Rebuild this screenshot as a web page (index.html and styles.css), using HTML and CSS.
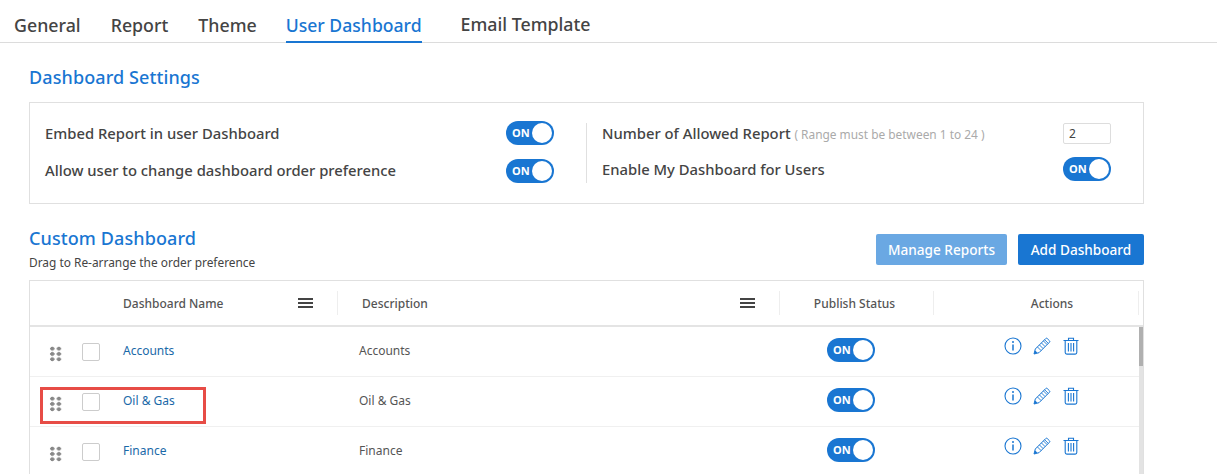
FILE: index.html
```html
<!DOCTYPE html>
<html lang="en">
<head>
    <meta charset="UTF-8">
    <title>User Dashboard</title>
    <link rel="stylesheet" href="styles.css">
</head>
<body>
    <svg class="icon-defs" width="0" height="0">
        <symbol id="i-info" viewBox="0 0 18 18">
            <circle cx="9" cy="9" r="8" fill="none" stroke="currentColor" stroke-width="1.1"/>
            <circle cx="9" cy="5" r="1" fill="currentColor"/>
            <path d="M9 7.4V13.6" fill="none" stroke="currentColor" stroke-width="1.5"/>
        </symbol>
        <symbol id="i-pencil" viewBox="0 0 18 18">
            <path d="M1 17l1.3-5L12.8 1.5a1 1 0 0 1 1.4 0l2.3 2.3a1 1 0 0 1 0 1.4L6 15.7z" fill="none" stroke="currentColor" stroke-width="1"/>
            <path d="M4.4 9.9l3.7 3.7M6.4 7.9l3.7 3.7M8.4 5.9l3.7 3.7M10.4 3.9l3.7 3.7M11.6 2.7l3.7 3.7" fill="none" stroke="currentColor" stroke-width="0.9"/>
            <path d="M1 17l1.2-3.4 2.2 2.2z" fill="currentColor"/>
        </symbol>
        <symbol id="i-trash" viewBox="0 0 18 18">
            <path d="M1.5 3.5H16.5M6.5 3.3V1.2H11.5V3.3M3.2 3.5V15.5a1.6 1.6 0 0 0 1.6 1.6H13.2a1.6 1.6 0 0 0 1.6-1.6V3.5" fill="none" stroke="currentColor" stroke-width="1.1"/>
            <path d="M6.4 6V14.5M9 6V14.5M11.6 6V14.5" fill="none" stroke="currentColor" stroke-width="1.1"/>
        </symbol>
    </svg>

    <nav class="tabs">
        <a class="tab">General</a>
        <a class="tab">Report</a>
        <a class="tab">Theme</a>
        <a class="tab active">User Dashboard</a>
        <a class="tab tab-email">Email Template</a>
    </nav>

    <main class="content">
        <h2 class="section-title">Dashboard Settings</h2>

        <section class="settings">
            <div class="settings-col left">
                <div class="setting">
                    <span class="label">Embed Report in user Dashboard</span>
                    <span class="toggle">ON</span>
                </div>
                <div class="setting">
                    <span class="label">Allow user to change dashboard order preference</span>
                    <span class="toggle">ON</span>
                </div>
            </div>
            <div class="settings-col right">
                <div class="setting">
                    <span class="label">Number of Allowed Report <small class="hint">( Range must be between 1 to 24 )</small></span>
                    <input class="num-input" type="text" value="2">
                </div>
                <div class="setting">
                    <span class="label">Enable My Dashboard for Users</span>
                    <span class="toggle">ON</span>
                </div>
            </div>
        </section>

        <div class="custom-head">
            <div>
                <h2 class="section-title">Custom Dashboard</h2>
                <p class="sub">Drag to Re-arrange the order preference</p>
            </div>
            <div class="buttons">
                <button class="btn btn-light">Manage Reports</button>
                <button class="btn">Add Dashboard</button>
            </div>
        </div>

        <section class="grid">
            <div class="grid-head">
                <div></div>
                <div class="th th-name"><span>Dashboard Name</span><span class="menu"></span></div>
                <div class="th th-desc"><span>Description</span><span class="menu"></span></div>
                <div class="th th-center th-status">Publish Status</div>
                <div class="th th-center th-actions">Actions</div>
            </div>
            <div class="grid-body">
                <div class="rows">
                    <div class="row">
                        <div class="row-tools"><span class="drag"></span><span class="check"></span></div>
                        <a class="name">Accounts</a>
                        <div class="desc">Accounts</div>
                        <div class="status"><span class="toggle">ON</span></div>
                        <div class="actions">
                            <svg class="icon"><use href="#i-info"/></svg>
                            <svg class="icon"><use href="#i-pencil"/></svg>
                            <svg class="icon"><use href="#i-trash"/></svg>
                        </div>
                    </div>
                    <div class="row">
                        <div class="row-tools"><span class="drag"></span><span class="check"></span></div>
                        <a class="name">Oil &amp; Gas</a>
                        <div class="desc">Oil &amp; Gas</div>
                        <div class="status"><span class="toggle">ON</span></div>
                        <div class="actions">
                            <svg class="icon"><use href="#i-info"/></svg>
                            <svg class="icon"><use href="#i-pencil"/></svg>
                            <svg class="icon"><use href="#i-trash"/></svg>
                        </div>
                        <div class="highlight"></div>
                    </div>
                    <div class="row">
                        <div class="row-tools"><span class="drag"></span><span class="check"></span></div>
                        <a class="name">Finance</a>
                        <div class="desc">Finance</div>
                        <div class="status"><span class="toggle">ON</span></div>
                        <div class="actions">
                            <svg class="icon"><use href="#i-info"/></svg>
                            <svg class="icon"><use href="#i-pencil"/></svg>
                            <svg class="icon"><use href="#i-trash"/></svg>
                        </div>
                    </div>
                </div>
                <div class="scrollbar"><div class="thumb"></div></div>
            </div>
        </section>
    </main>
</body>
</html>
```

FILE: styles.css
```css
* {
    box-sizing: border-box;
}
html, body {
    height: 474px;
    overflow: hidden;
}
body {
    margin: 0;
    background: #fff;
    color: #444;
    font-family: "Noto Sans", "Open Sans", sans-serif;
}
.icon-defs {
    position: absolute;
}

/* tabs */
.tabs {
    display: flex;
    height: 43px;
    padding-left: 14px;
    border-bottom: 1px solid #dcdcdc;
}
.tab {
    height: 43px;
    margin-right: 30px;
    padding-top: 13px;
    font-size: 17.8px;
    line-height: 25px;
    font-weight: 500;
    color: #444;
}
.tab.active {
    color: #1976d2;
    border-bottom: 2px solid #1976d2;
    font-size: 17.6px;
    margin-left: -1px;
    margin-right: 39px;
}
.tab-email {
    padding-top: 12px;
}

/* main */
.content {
    width: 1144px;
    padding-left: 29px;
}
.section-title {
    margin: 0;
    font-size: 18px;
    line-height: 24px;
    font-weight: 500;
    letter-spacing: 0.1px;
    color: #1976d2;
}
.content > .section-title {
    margin-top: 22px;
}
.settings {
    display: flex;
    height: 102px;
    margin-top: 13px;
    padding: 20px 0 0 15px;
    border: 1px solid #e0e0e0;
}
.settings-col {
    height: 60px;
    font-size: 14.8px;
    font-weight: 500;
    color: #444;
}
.settings-col.left {
    width: 542px;
    padding-right: 32px;
    border-right: 1px solid #e0e0e0;
}
.settings-col.right {
    width: 524px;
    padding-left: 15px;
}
.setting {
    display: flex;
    justify-content: space-between;
    align-items: center;
    height: 24px;
    margin-bottom: 14px;
    line-height: 22px;
}
.setting:first-child {
    margin-top: -2px;
}
.settings-col.right .setting {
    margin-bottom: 12px;
}
.left .setting + .setting .label {
    margin-top: -2px;
}
.hint {
    font-size: 11.9px;
    font-weight: 400;
    color: #aaa;
}
.num-input {
    width: 48px;
    height: 21px;
    padding: 0 5px;
    border: 1px solid #ddd;
    border-radius: 2px;
    font: 12px "Noto Sans", sans-serif;
    color: #444;
}
.toggle {
    position: relative;
    display: inline-block;
    width: 48px;
    height: 24px;
    padding-left: 6px;
    border-radius: 12px;
    background: #1976d2;
    color: #fff;
    font-size: 11px;
    line-height: 23px;
    font-weight: 700;
}
.toggle::after {
    content: "";
    position: absolute;
    top: 2px;
    right: 2px;
    width: 20px;
    height: 20px;
    border-radius: 50%;
    background: #fff;
}

/* custom dashboard */
.custom-head {
    display: flex;
    justify-content: space-between;
    height: 76px;
    padding-top: 22px;
}
.sub {
    margin: 5px 0 0;
    font-size: 11.9px;
    line-height: 15px;
    color: #444;
}
.buttons {
    display: flex;
    gap: 11px;
    padding-top: 8px;
}
.btn {
    width: 126px;
    height: 31px;
    padding: 0;
    border: 0;
    border-radius: 2px;
    background: #1976d2;
    color: #fff;
    font: 500 13.6px "Noto Sans", sans-serif;
}
.btn-light {
    width: 131px;
    background: #6aa8e3;
}

/* table */
.grid {
    border: 1px solid #e0e0e0;
    border-bottom: 0;
}
.grid-head, .row {
    display: grid;
    grid-template-columns: 93px 215px 442px 154px 205px;
}
.grid-head {
    height: 46px;
    align-items: center;
    border-bottom: 2px solid #e4e4e4;
}
.th {
    display: flex;
    align-items: center;
    justify-content: space-between;
    height: 24px;
    font-size: 12px;
    font-weight: 500;
    color: #555;
    border-right: 1px solid #eee;
}
.th-name {
    padding-right: 24px;
}
.th-desc {
    padding-left: 24px;
    padding-right: 24px;
}
.th-center {
    justify-content: center;
}
.th-status {
    padding-right: 4px;
}
.th-actions {
    padding-left: 32px;
}
.menu {
    width: 15px;
    height: 10px;
    border-top: 2px solid #444;
    border-bottom: 2px solid #444;
    position: relative;
}
.menu::after {
    content: "";
    position: absolute;
    left: 0;
    right: 0;
    top: 2px;
    height: 2px;
    background: #444;
}
.grid-body {
    display: flex;
}
.rows {
    width: 1109px;
}
.row {
    position: relative;
    height: 50px;
    align-items: center;
    padding-bottom: 3px;
    border-bottom: 1px solid #f0f0f0;
    font-size: 12px;
}
.row-tools {
    display: flex;
    align-items: center;
    padding-left: 19px;
    gap: 20px;
}
.drag {
    width: 13px;
    height: 16px;
    margin-top: 8px;
    background-image: radial-gradient(circle, #888 1.9px, transparent 2.3px);
    background-size: 6.6px 5.3px;
}
.check {
    width: 18px;
    height: 18px;
    margin-top: 4px;
    border: 1px solid #ccc;
    border-radius: 2px;
}
.name {
    color: #1a69a8;
}
.desc {
    padding-left: 21px;
    color: #555;
}
.status {
    display: flex;
    justify-content: center;
    padding-right: 12px;
}
.actions {
    display: flex;
    justify-content: center;
    gap: 11px;
    padding-left: 10px;
    margin-top: -8px;
}
.icon {
    width: 18px;
    height: 18px;
    color: #1976d2;
}
.highlight {
    position: absolute;
    left: 10px;
    top: 10px;
    width: 166px;
    height: 37px;
    border: 3px solid #e74c46;
}
.scrollbar {
    flex: 1;
    background: #e3e3e3;
}
.thumb {
    height: 39px;
    background: #b0b0b0;
}
```
